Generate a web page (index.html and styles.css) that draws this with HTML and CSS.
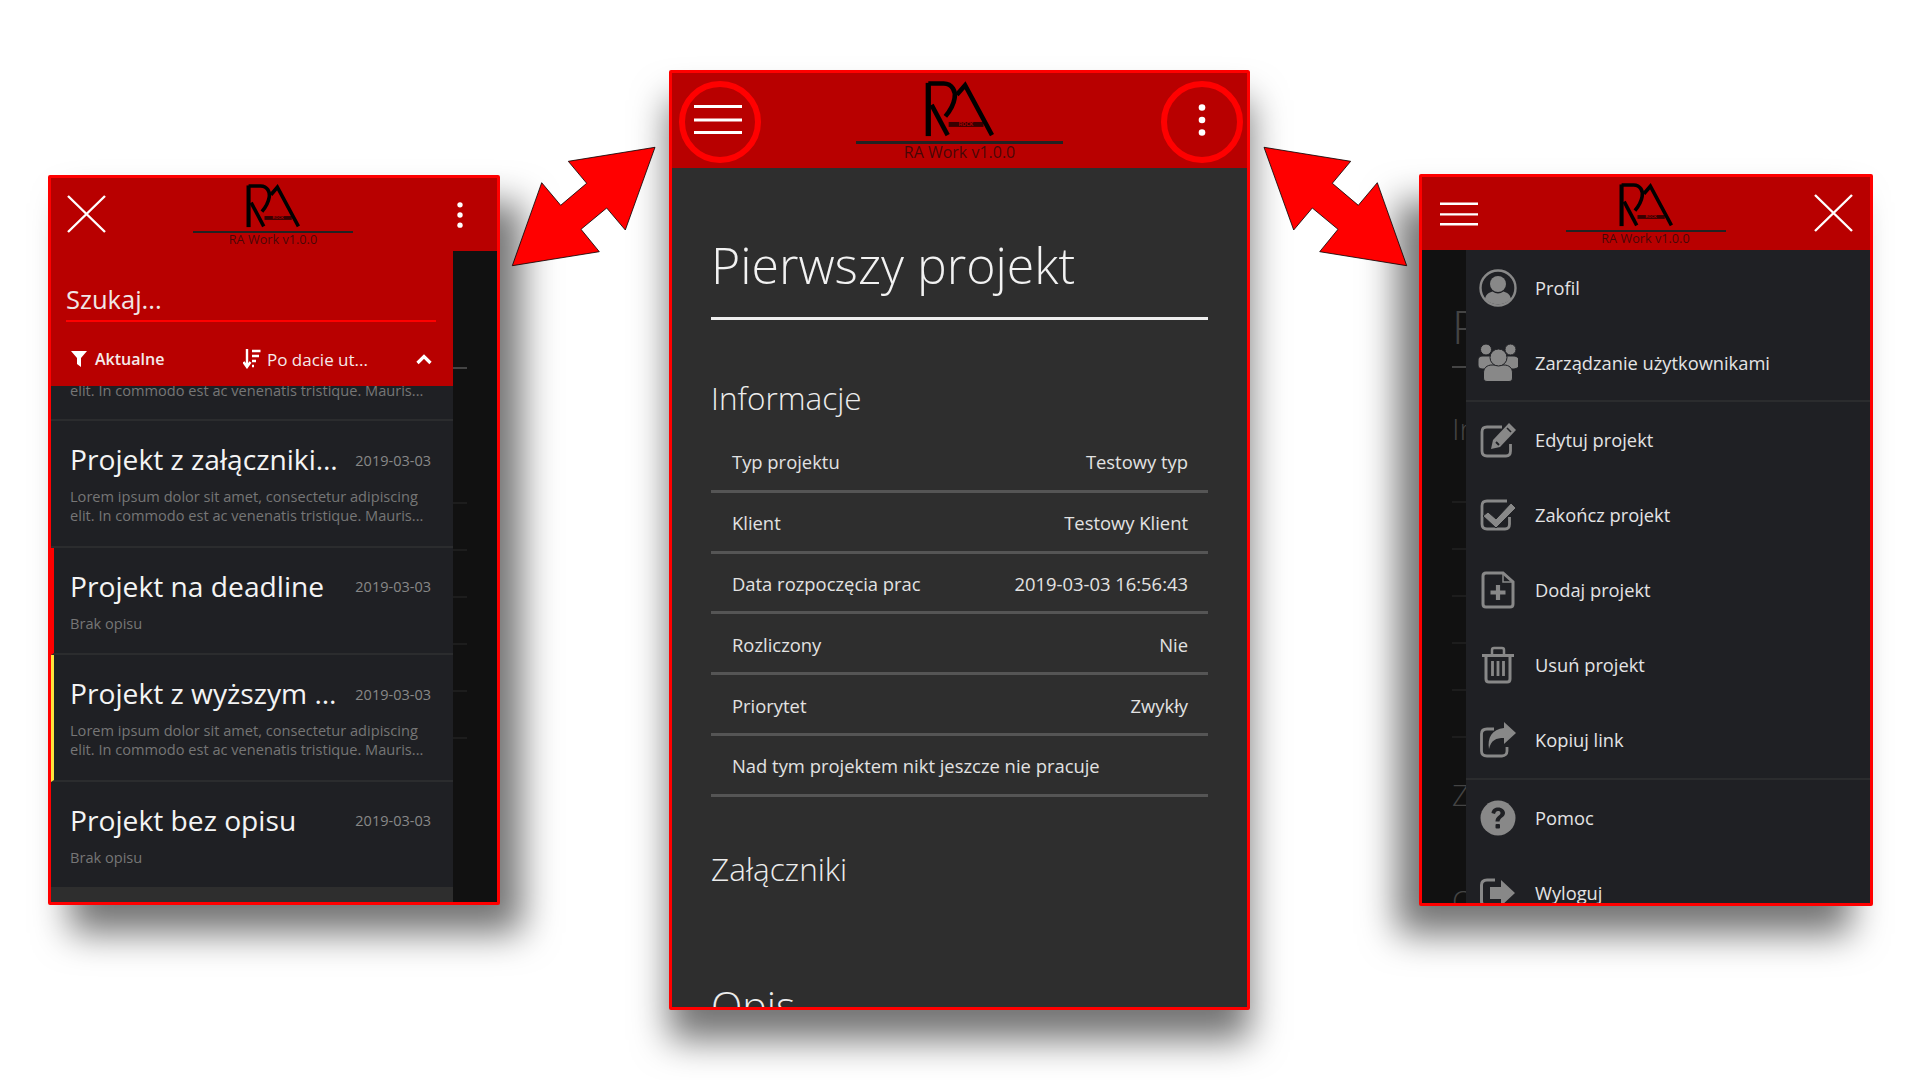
FILE: index.html
```html
<!DOCTYPE html>
<html>

<head>
    <meta charset="UTF-8">
    <meta name="viewport" content="width=device-width">
    <title>RA Work</title>
    <link rel="stylesheet" href="styles.css">
</head>

<body>
    <svg class="defs" width="0" height="0">
        <defs>
            <symbol id="logo" viewBox="28 22 210 168">
                <g fill="none" stroke="#000" stroke-width="14">
                    <path d="M38 190V28" stroke-width="16" />
                    <path d="M38 30H85C112 30 122 55 118 75C114 100 100 118 90 130" stroke-width="14" />
                    <path d="M48 95L97 187" />
                    <path d="M125 64L150 35L232 187" />
                </g>
                <rect x="100" y="147" width="106" height="15" fill="#000" opacity=".7" />
                <text x="153" y="160" class="logo-small" text-anchor="middle">ROCK</text>
            </symbol>
            <symbol id="burger" viewBox="0 0 48 29">
                <path d="M0 1.5H48M0 15H48M0 27.5H48" stroke="#fff" stroke-width="3" />
            </symbol>
            <symbol id="cross" viewBox="0 0 39 38">
                <path d="M1 1L38 37M38 1L1 37" stroke="#fff" stroke-width="2.4" />
            </symbol>
            <symbol id="dots" viewBox="0 0 8 32">
                <circle cx="4" cy="3.5" r="3.3" fill="#fff" />
                <circle cx="4" cy="16" r="3.3" fill="#fff" />
                <circle cx="4" cy="28.5" r="3.3" fill="#fff" />
            </symbol>
        </defs>
    </svg>

    <!-- lista projektow -->
    <section class="phone phone-left">
        <header class="top top-small">
            <svg class="btn-cross"><use href="#cross" /></svg>
            <div class="brand">
                <svg class="logo"><use href="#logo" /></svg>
                <div class="brand-line"></div>
                <div class="brand-name">RA Work v1.0.0</div>
            </div>
            <svg class="btn-dots"><use href="#dots" /></svg>
        </header>
        <div class="body">
            <div class="list-col">
                <div class="search">
                    <div class="search-input">Szukaj...</div>
                    <div class="filters">
                        <div class="filter filter-status">
                            <svg width="16" height="18" viewBox="0 0 16 18">
                                <path d="M0 1H16L10 8V17L6 14V8Z" fill="#fff" />
                            </svg>
                            <span>Aktualne</span>
                        </div>
                        <div class="filter filter-sort">
                            <svg width="18" height="20" viewBox="0 0 18 20">
                                <path d="M4 0V16M0.5 13L4 18L7.5 13" fill="none" stroke="#fff" stroke-width="2.4" />
                                <path d="M9 2H17.5M9 7H16M9 12H13M9 17H11" stroke="#fff" stroke-width="2.4" />
                            </svg>
                            <span>Po dacie ut...</span>
                        </div>
                        <svg class="chevron" width="16" height="11" viewBox="0 0 16 11">
                            <path d="M1.5 9L8 2.5L14.5 9" fill="none" stroke="#fff" stroke-width="3.2" />
                        </svg>
                    </div>
                </div>
                <div class="list">
                    <div class="item item-cut">
                        <p class="item-desc">elit. In commodo est ac venenatis tristique. Mauris...</p>
                    </div>
                    <div class="item">
                        <div class="item-head">
                            <h3>Projekt z załącznikiem</h3>
                            <span class="item-date">2019-03-03</span>
                        </div>
                        <p class="item-desc">Lorem ipsum dolor sit amet, consectetur adipiscing<br>elit. In commodo est ac venenatis tristique. Mauris...</p>
                    </div>
                    <div class="item item-red">
                        <div class="item-head">
                            <h3>Projekt na deadline</h3>
                            <span class="item-date">2019-03-03</span>
                        </div>
                        <p class="item-desc">Brak opisu</p>
                    </div>
                    <div class="item item-yellow">
                        <div class="item-head">
                            <h3>Projekt z wyższym priorytetem</h3>
                            <span class="item-date">2019-03-03</span>
                        </div>
                        <p class="item-desc">Lorem ipsum dolor sit amet, consectetur adipiscing<br>elit. In commodo est ac venenatis tristique. Mauris...</p>
                    </div>
                    <div class="item item-last">
                        <div class="item-head">
                            <h3>Projekt bez opisu</h3>
                            <span class="item-date">2019-03-03</span>
                        </div>
                        <p class="item-desc">Brak opisu</p>
                    </div>
                </div>
            </div>
            <div class="dim dim-left">
                <div class="tick tick-first"></div>
                <div class="tick tick-row1"></div>
                <div class="tick"></div>
                <div class="tick"></div>
                <div class="tick"></div>
                <div class="tick"></div>
                <div class="tick"></div>
            </div>
        </div>
    </section>

    <!-- szczegoly projektu -->
    <section class="phone phone-mid">
        <header class="top top-big">
            <div class="ring ring-left"><svg class="btn-burger"><use href="#burger" /></svg></div>
            <div class="brand">
                <svg class="logo"><use href="#logo" /></svg>
                <div class="brand-line"></div>
                <div class="brand-name">RA Work v1.0.0</div>
            </div>
            <div class="ring ring-right"><svg class="btn-dots"><use href="#dots" /></svg></div>
        </header>
        <div class="details">
            <h1>Pierwszy projekt</h1>
            <h2 class="h-info">Informacje</h2>
            <div class="row"><span>Typ projektu</span><span>Testowy typ</span></div>
            <div class="row"><span>Klient</span><span>Testowy Klient</span></div>
            <div class="row"><span>Data rozpoczęcia prac</span><span>2019-03-03 16:56:43</span></div>
            <div class="row"><span>Rozliczony</span><span>Nie</span></div>
            <div class="row"><span>Priorytet</span><span>Zwykły</span></div>
            <div class="row"><span>Nad tym projektem nikt jeszcze nie pracuje</span></div>
            <h2 class="h-files">Załączniki</h2>
            <h2 class="h-desc">Opis</h2>
        </div>
    </section>

    <!-- menu -->
    <section class="phone phone-right">
        <header class="top top-small">
            <svg class="btn-burger"><use href="#burger" /></svg>
            <div class="brand">
                <svg class="logo"><use href="#logo" /></svg>
                <div class="brand-line"></div>
                <div class="brand-name">RA Work v1.0.0</div>
            </div>
            <svg class="btn-cross"><use href="#cross" /></svg>
        </header>
        <div class="body">
            <div class="dim dim-right">
                <div class="dim-title">P</div>
                <div class="tick tick-first"></div>
                <div class="dim-head">In</div>
                <div class="tick tick-row1"></div>
                <div class="tick"></div>
                <div class="tick"></div>
                <div class="tick"></div>
                <div class="tick"></div>
                <div class="tick"></div>
                <div class="dim-head dim-z">Z</div>
                <div class="dim-head dim-o">O</div>
            </div>
            <nav class="menu">
                <div class="menu-group">
                    <a class="menu-row">
                        <svg viewBox="0 0 40 40"><circle cx="20" cy="20" r="17.5" fill="none" stroke="#888" stroke-width="2.4" />
                            <circle cx="20" cy="16" r="8" fill="#888" />
                            <path d="M7 31C8 26 11 24.500 14.500 23.500C18 26 22 26 25.500 23.500C29 24.500 32 26 33 31C26 38 14 38 7 31Z" fill="#888" /></svg>
                        <span>Profil</span>
                    </a>
                    <a class="menu-row">
                        <svg viewBox="0 0 40 40"><g fill="#888" stroke="#1f2024" stroke-width="1">
                            <circle cx="8" cy="6.500" r="5.500" /><circle cx="32.500" cy="6.500" r="5.500" />
                            <path d="M0 18C0 14 2 13 5 13H35C38 13 41 14 41 18V22C41 25 38 26 34 26H6C2 26 0 25 0 22Z" />
                            <path d="M5.500 30C5.500 25 9 22 14 22H26C31 22 34.500 25 34.500 30V35C34.500 37 33 38.500 31 38.500H9C7 38.500 5.500 37 5.500 35Z" />
                            <circle cx="20.500" cy="14.500" r="8.500" /></g></svg>
                        <span>Zarządzanie użytkownikami</span>
                    </a>
                </div>
                <div class="menu-group menu-group2">
                    <a class="menu-row">
                        <svg viewBox="0 0 40 40"><path d="M24 7H9C5.500 7 4 9 4 12V31C4 34 5.500 36 9 36H28C31 36 32.500 34 32.500 31V24" fill="none" stroke="#888" stroke-width="2.800" />
                            <path d="M31 3L38 10L22 27L13 29L15 20Z" fill="#888" /><path d="M18 22L21 25" stroke="#1f2024" stroke-width="2" /><path d="M29 8L33 12" stroke="#1f2024" stroke-width="1.600" /></svg>
                        <span>Edytuj projekt</span>
                    </a>
                    <a class="menu-row">
                        <svg viewBox="0 0 40 40"><path d="M29 6H9C5.500 6 4 8 4 11V29C4 32 5.500 34 9 34H27C30 34 31.500 32 31.500 29V22" fill="none" stroke="#888" stroke-width="2.800" />
                            <path d="M10 17L18 24L33 8L38 13L18 33L5 21Z" fill="#888" stroke="#1f2024" stroke-width="1" /></svg>
                        <span>Zakończ projekt</span>
                    </a>
                    <a class="menu-row">
                        <svg viewBox="0 0 40 40"><path d="M8 3H25L35 12V34C35 36 33.500 37 32 37H8C6.500 37 5 36 5 34V6C5 4 6.500 3 8 3Z" fill="none" stroke="#888" stroke-width="3" />
                            <path d="M25 3V12H35" fill="none" stroke="#888" stroke-width="1.500" /><path d="M20 15V30M12.500 22.500H27.500" stroke="#888" stroke-width="4.200" /></svg>
                        <span>Dodaj projekt</span>
                    </a>
                    <a class="menu-row">
                        <svg viewBox="0 0 40 40"><path d="M4 10.500H36" stroke="#888" stroke-width="3" /><path d="M14 10V5C14 3.500 15 3 16 3H24C25 3 26 3.500 26 5V10" fill="none" stroke="#888" stroke-width="2.500" />
                            <path d="M8 10V34C8 36 9 37 11 37H29C31 37 32 36 32 34V10" fill="none" stroke="#888" stroke-width="3" /><path d="M14.500 16V31M20 16V31M25.500 16V31" stroke="#888" stroke-width="2.800" /></svg>
                        <span>Usuń projekt</span>
                    </a>
                    <a class="menu-row">
                        <svg viewBox="0 0 40 40"><path d="M16 9H9C5.500 9 3.500 11 3.500 14V31C3.500 34 5.500 36 9 36H24C27 36 29 34 29 31V27" fill="none" stroke="#888" stroke-width="2.800" />
                            <path d="M26 2L38 13L26 24V18C18 18 13 20 11 29C9 18 14 9 26 8Z" fill="#888" /></svg>
                        <span>Kopiuj link</span>
                    </a>
                </div>
                <div class="menu-group menu-last">
                    <a class="menu-row">
                        <svg viewBox="0 0 40 40"><circle cx="20" cy="20" r="17.500" fill="#888" />
                            <path d="M13.500 15C14 11 17 9.500 20 9.500C24 9.500 27 12 27 15C27 19 22 19.500 21.500 23.500H17.500C17.500 18 22.500 18 22.500 15C22.500 13.500 21.500 13 20 13C18.500 13 17.500 14 17 16Z" fill="#1f2024" />
                            <rect x="17.500" y="26" width="4.500" height="4.500" rx="1" fill="#1f2024" /></svg>
                        <span>Pomoc</span>
                    </a>
                    <a class="menu-row">
                        <svg viewBox="0 0 40 40"><path d="M17 7H9C5.500 7 3.500 9 3.500 12V28C3.500 31 5.500 33 9 33H17" fill="none" stroke="#888" stroke-width="3" />
                            <path d="M23 7L37 20L23 33V26H12V14H23Z" fill="#888" /></svg>
                        <span>Wyloguj</span>
                    </a>
                </div>
            </nav>
        </div>
    </section>

    <svg class="arrow arrow-left" viewBox="0 0 148 124">
        <polygon points="145,2.300 58.300,16.300 76.700,38.300 50.700,60.300 31.700,37.700 2.300,120.700 89.300,106.700 71,84.300 96.700,63 115.300,85" />
    </svg>
    <svg class="arrow arrow-right" viewBox="0 0 148 124">
        <polygon points="145,2.300 58.300,16.300 76.700,38.300 50.700,60.300 31.700,37.700 2.300,120.700 89.300,106.700 71,84.300 96.700,63 115.300,85" />
    </svg>
</body>

</html>
```

FILE: styles.css
```css
* {
    box-sizing: border-box;
}

html,
body {
    height: 100%;
}

body {
    margin: 0;
    position: relative;
    overflow: hidden;
    background: #fff;
    font-family: "Open Sans", "Noto Sans", sans-serif;
    color: #e4e4e4;
}

h1,
h2,
h3,
p {
    margin: 0;
    font-weight: normal;
}

.defs {
    position: absolute;
}

.logo-small {
    font-family: "Liberation Sans", sans-serif;
    font-size: 15px;
    font-weight: bold;
    fill: #b80000;
}

/*********************/
/* Telefony */
/*********************/
.phone {
    position: absolute;
    display: flex;
    flex-direction: column;
    overflow: hidden;
    border: 3px solid #f00;
    border-radius: 2px;
    background: #2e2e2e;
}

.phone-left {
    left: 48px;
    top: 175px;
    width: 452px;
    height: 730px;
    box-shadow: 22px 28px 36px rgba(0, 0, 0, .55);
}

.phone-mid {
    left: 669px;
    top: 70px;
    width: 581px;
    height: 940px;
    box-shadow: 0 30px 36px rgba(0, 0, 0, .55);
}

.phone-right {
    left: 1419px;
    top: 174px;
    width: 454px;
    height: 732px;
    box-shadow: -22px 28px 36px rgba(0, 0, 0, .55);
}

/*********************/
/* Naglowek */
/*********************/
.top {
    flex: none;
    display: grid;
    grid-template-columns: 1fr auto 1fr;
    align-items: center;
    background: #b80000;
}

.top>svg:last-child,
.top>.ring:last-child {
    justify-self: end;
}

.top-small {
    height: 73px;
    padding: 0 17px 0 16px;
}

.phone-right .top-small {
    padding-left: 18px;
}

.phone-left .brand {
    margin-left: -1px;
}

.phone-right .brand {
    margin-left: -2px;
}

.top-big {
    height: 95px;
}

.brand {
    display: flex;
    flex-direction: column;
    align-items: center;
}

.logo {
    display: block;
    width: 54px;
    height: 45px;
}

.brand-line {
    width: 160px;
    height: 2.500px;
    margin-top: 3px;
    background: #222;
}

.brand-name {
    margin-top: -1px;
    font-size: 12.700px;
    line-height: 14px;
    color: rgba(30, 10, 10, .75);
}

.top-big .logo {
    width: 69px;
    height: 57px;
}

.top-big .brand-line {
    width: 207px;
    height: 3px;
    margin-top: 4px;
}

.top-big .brand-name {
    font-size: 16px;
    line-height: 18px;
}

.btn-burger {
    display: block;
    width: 38px;
    height: 24px;
}

.btn-cross {
    display: block;
    width: 39px;
    height: 38px;
    margin-top: -2px;
}

.btn-dots {
    display: block;
    width: 8px;
    height: 26px;
    margin-right: 16px;
}

.ring {
    display: flex;
    align-items: center;
    justify-content: center;
    width: 82px;
    height: 82px;
    margin-top: 2px;
    border: 6px solid #f00;
    border-radius: 50%;
}

.ring-left {
    margin-left: 7px;
}

.ring-right {
    margin-right: 4px;
}

.ring .btn-burger {
    width: 48px;
    height: 29px;
    margin: -4px 0 0 -4px;
}

.ring .btn-dots {
    height: 32px;
    margin: -3px 0 0;
}

/*********************/
/* Ciemne tlo z tylu */
/*********************/
.body {
    flex: 1;
    display: flex;
    min-height: 0;
}

.dim {
    flex: none;
    overflow: hidden;
    background: #111;
    color: #444;
}

.dim-left {
    width: 44px;
    padding-top: 116px;
}

.dim-right {
    width: 44px;
    padding: 48px 0 0 30px;
    font-weight: 300;
    white-space: nowrap;
}

.tick {
    width: 14px;
    height: 2px;
    margin-top: 45px;
    background: #1d1d1d;
}

.tick-first {
    margin-top: 0;
    background: #444;
}

.dim-left .tick-row1 {
    margin-top: 133px;
}

.dim-right .tick-first {
    margin-top: 12px;
}

.dim-right .tick-row1 {
    margin-top: 54px;
}

.dim-title {
    font-size: 46px;
    line-height: 56px;
}

.dim-head {
    margin-top: 43px;
    font-size: 30px;
    line-height: 36px;
}

.dim-z {
    margin-top: 39px;
}

.dim-o {
    margin-top: 70px;
}

/*********************/
/* Lista projektow */
/*********************/
.list-col {
    flex: 1;
    display: flex;
    flex-direction: column;
    min-width: 0;
}

.search {
    flex: none;
    height: 135px;
    padding: 30px 17px 0 15px;
    background: #b80000;
}

.search-input {
    height: 41px;
    border-bottom: 2px solid #f00;
    font-size: 25.500px;
    line-height: 37px;
    color: #f0e6e6;
}

.filters {
    display: flex;
    align-items: center;
    height: 52px;
    margin-top: 11px;
    padding: 0 4px 0 5px;
    font-size: 16px;
    font-weight: 600;
    color: #f5eaea;
}

.filter {
    display: flex;
    align-items: center;
    white-space: nowrap;
}

.filter-status {
    width: 172px;
    gap: 8px;
}

.filter-sort {
    flex: 1;
    gap: 6px;
    font-size: 17px;
    font-weight: 400;
}

.list {
    flex: 1;
    min-height: 0;
    overflow: hidden;
    background: #2e2e2e;
}

.item {
    padding: 20px 22px 20.500px 19px;
    border-bottom: 2px solid #2b2c2e;
    background: #1f2024;
}

.item-cut {
    margin-top: -5px;
    padding-top: 0;
    padding-bottom: 19px;
}

.item-last {
    border-bottom: none;
}

.item-red {
    padding-left: 16px;
    border-left: 3px solid #f00;
}

.item-yellow {
    padding-left: 16px;
    border-left: 3px solid #ffe23b;
}

.item-head {
    display: flex;
    align-items: center;
    gap: 17px;
    height: 38px;
    margin: -1px 0 9px;
}

.item-head h3 {
    flex: 1;
    min-width: 0;
    overflow: hidden;
    white-space: nowrap;
    text-overflow: ellipsis;
    font-size: 28.200px;
    line-height: 38px;
    color: #f4f4f4;
}

.item-date {
    flex: none;
    margin-top: 2px;
    font-size: 14.500px;
    color: #888;
}

.item-desc {
    font-size: 14.600px;
    line-height: 19px;
    white-space: nowrap;
    color: #767676;
}

/*********************/
/* Szczegoly */
/*********************/
.details {
    flex: 1;
    min-height: 0;
    overflow: hidden;
    padding: 67px 39px 0;
    background: #2e2e2e;
}

.details h1 {
    height: 85px;
    padding-bottom: 22px;
    border-bottom: 3px solid #eee;
    font-size: 50px;
    font-weight: 300;
    line-height: 60px;
    color: #f2f2f2;
}

.details h2 {
    font-size: 31.500px;
    font-weight: 300;
    line-height: 40px;
    color: #ececec;
}

.details .h-info {
    margin: 58px 0 14px;
}

.details .h-files {
    margin-top: 52px;
}

.details .h-desc {
    margin-top: 92px;
    font-size: 41px;
    line-height: 48px;
}

.row {
    display: flex;
    align-items: center;
    justify-content: space-between;
    height: 60.800px;
    padding: 2px 20px 0 21px;
    border-bottom: 3px solid #555;
    font-size: 18.400px;
    color: #e2e2e2;
}

/*********************/
/* Menu */
/*********************/
.menu {
    flex: 1;
    min-width: 0;
    overflow: hidden;
    background: #1f2024;
}

.menu-group {
    border-bottom: 2px solid #2b2c2e;
}

.menu-group2 {
    padding-bottom: 1px;
}

.menu-last {
    border-bottom: none;
}

.menu-row {
    display: flex;
    align-items: center;
    height: 75px;
    padding-left: 12px;
    font-size: 18.300px;
    color: #e4e4e4;
}

.menu-row svg {
    flex: none;
    width: 40px;
    height: 40px;
    margin-right: 17px;
}

/*********************/
/* Strzalki */
/*********************/
.arrow {
    position: absolute;
    top: 145px;
    width: 148px;
    height: 124px;
}

.arrow polygon {
    fill: #f00;
    stroke: #000;
    stroke-width: .8;
}

.arrow-left {
    left: 510px;
}

.arrow-right {
    left: 1261px;
    transform: scaleX(-1);
}
```
